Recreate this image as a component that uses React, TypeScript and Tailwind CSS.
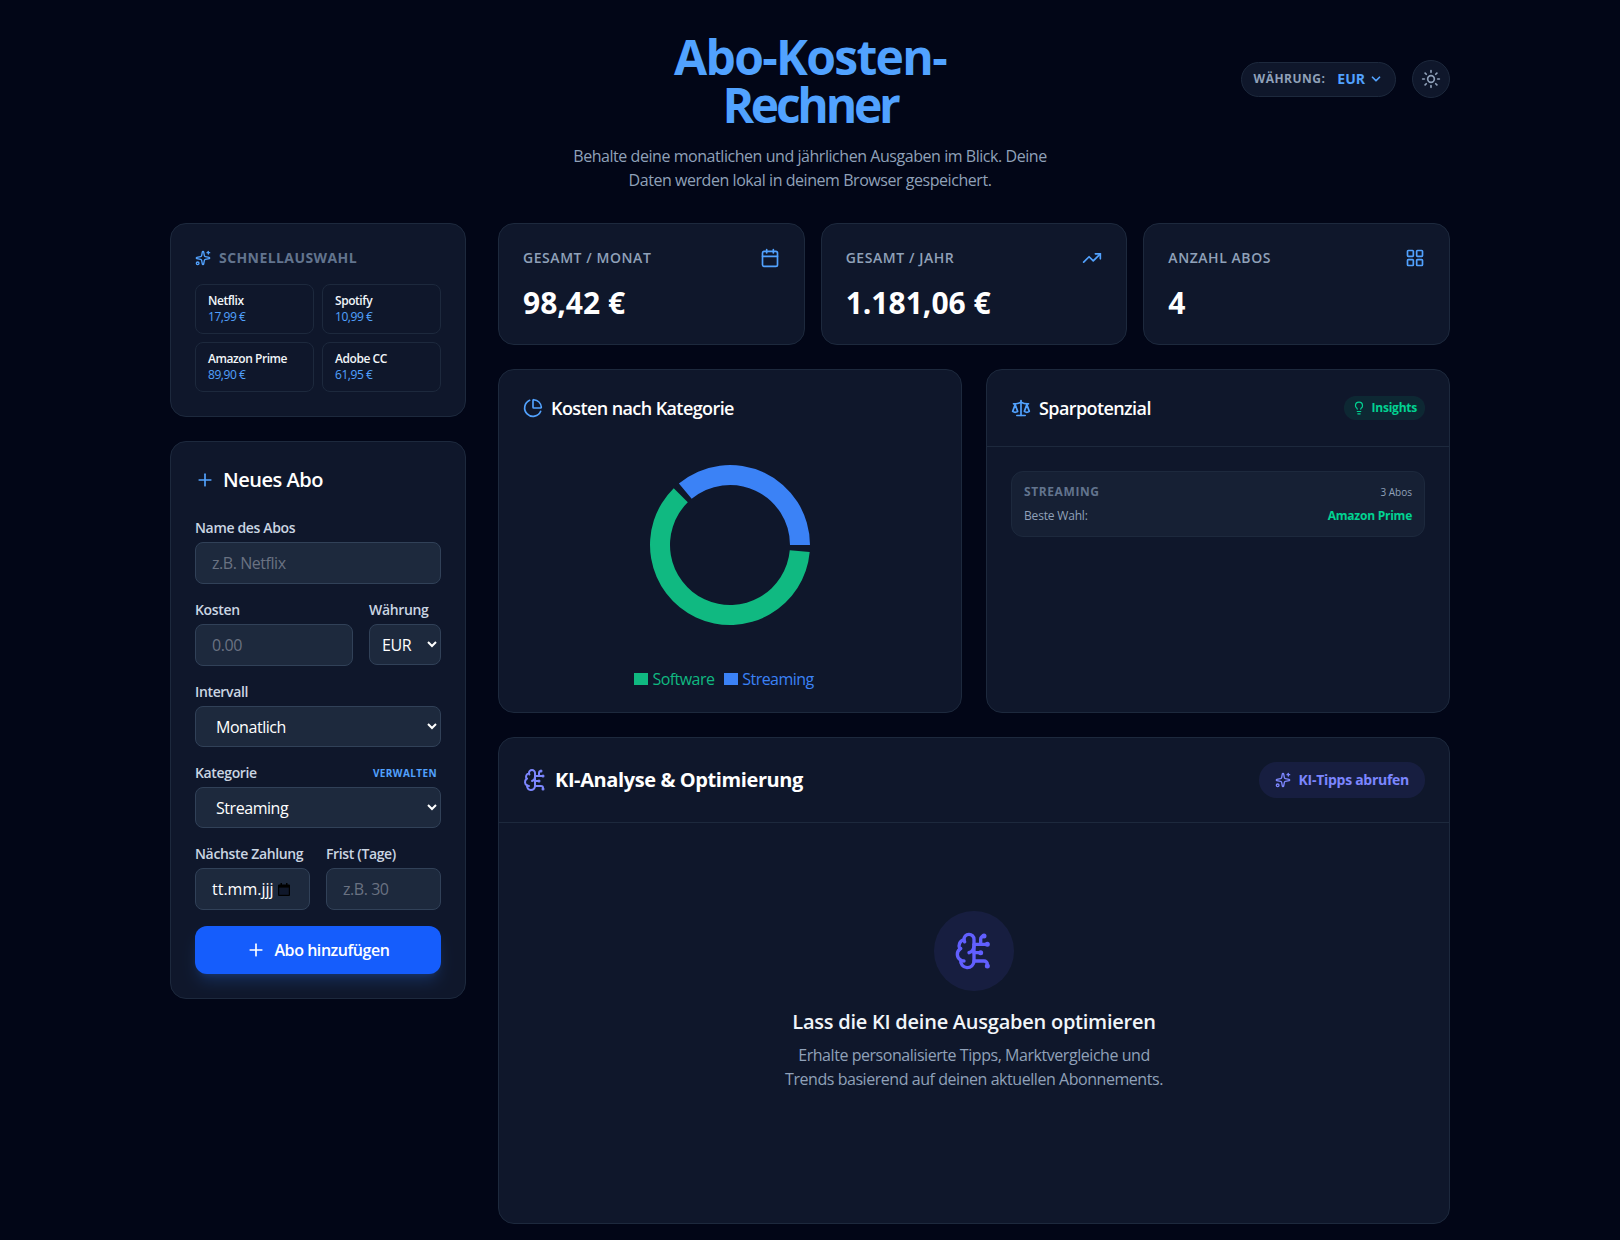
import { BrainCircuit, Calendar, ChartPie, ChevronDown, LayoutGrid, Lightbulb, Plus, Scale, Sparkles, Sun, TrendingUp } from 'lucide-react';

const quickPicks = [
  { name: 'Netflix', price: '17,99 €' },
  { name: 'Spotify', price: '10,99 €' },
  { name: 'Amazon Prime', price: '89,90 €' },
  { name: 'Adobe CC', price: '61,95 €' },
];

const fieldClass =
  'w-full rounded-lg border border-slate-700 bg-slate-800 text-base text-white placeholder:text-gray-500 h-[42px] px-4 py-2';
const selectClass = 'w-full rounded-lg border border-slate-700 bg-slate-800 text-base text-white h-[41px] px-4';
const labelClass = 'mb-1 block text-sm font-semibold tracking-[-0.025em] text-slate-300';

// annulus sector, angles in degrees counter-clockwise from 3 o'clock
function arc(cx: number, cy: number, inner: number, outer: number, from: number, to: number) {
  const pt = (r: number, a: number) => {
    const rad = (a * Math.PI) / 180;
    return `${(cx + r * Math.cos(rad)).toFixed(2)} ${(cy - r * Math.sin(rad)).toFixed(2)}`;
  };
  const large = to - from > 180 ? 1 : 0;
  return `M${pt(outer, from)} A${outer} ${outer} 0 ${large} 0 ${pt(outer, to)} L${pt(inner, to)} A${inner} ${inner} 0 ${large} 1 ${pt(inner, from)} Z`;
}

function StatCard({ label, value, icon }: { label: string; value: string; icon: React.ReactNode }) {
  return (
    <div className="h-[122px] rounded-2xl border border-slate-800 bg-slate-900 p-6">
      <div className="mb-[17px] flex items-center justify-between">
        <span className="text-sm font-semibold uppercase tracking-[0.04em] text-slate-400">{label}</span>
        {icon}
      </div>
      <div className="text-3xl font-bold tracking-normal text-white">{value}</div>
    </div>
  );
}

export default function App() {
  return (
    <div className="min-h-screen bg-[#020617] pb-4 font-['Open_Sans','Noto_Sans',sans-serif] tracking-[-0.028em] text-white">
      <div className="mx-auto max-w-7xl">
        {/* Header */}
        <header className="flex items-start pt-8 pb-[31px]">
          <div className="flex-1" />
          <div className="w-[520px] text-center">
            <h1 className="mt-px mb-[15px] text-5xl font-bold tracking-[-0.035em] text-[#51a2ff]">
              Abo-Kosten-
              <br />
              <span className="tracking-[-0.068em]">Rechner</span>
            </h1>
            <p className="text-base text-slate-400">
              Behalte deine monatlichen und jährlichen Ausgaben im Blick. Deine
              <br />
              Daten werden lokal in deinem Browser gespeichert.
            </p>
          </div>
          <div className="flex flex-1 items-center justify-end gap-4 pt-7">
            <div className="flex h-[35px] items-center gap-3 rounded-full border border-slate-800 bg-slate-900 px-3">
              <span className="text-xs font-bold uppercase tracking-[0.04em] text-slate-400">Währung:</span>
              <span className="flex items-center gap-1 text-sm font-bold tracking-normal text-blue-400">
                EUR
                <ChevronDown className="h-3.5 w-3.5" strokeWidth={3} />
              </span>
            </div>
            <button className="flex h-[38px] w-[38px] items-center justify-center rounded-full border border-slate-800 bg-slate-900 text-slate-400">
              <Sun className="h-5 w-5" />
            </button>
          </div>
        </header>

        <div className="grid grid-cols-4 items-start gap-8">
          {/* Sidebar */}
          <aside className="flex flex-col gap-6">
            <div className="rounded-2xl border border-slate-800 bg-slate-900 p-6">
              <div className="mb-4 flex items-center gap-2">
                <Sparkles className="h-4 w-4 text-blue-400" />
                <h2 className="text-sm font-bold uppercase tracking-[0.03em] text-slate-500">Schnellauswahl</h2>
              </div>
              <div className="grid grid-cols-2 gap-2">
                {quickPicks.map((p) => (
                  <button key={p.name} className="rounded-lg border border-slate-800 bg-slate-900 px-3 py-2 text-left text-xs">
                    <div className="font-semibold text-slate-100">{p.name}</div>
                    <div className="text-blue-400">{p.price}</div>
                  </button>
                ))}
              </div>
            </div>

            <div className="rounded-2xl border border-slate-800 bg-slate-900 p-6">
              <div className="mb-6 flex items-center gap-2">
                <Plus className="h-5 w-5 text-blue-400" />
                <h2 className="text-xl font-semibold tracking-[-0.023em] text-white">Neues Abo</h2>
              </div>
              <div className="flex flex-col gap-4">
                <div>
                  <label className={labelClass}>Name des Abos</label>
                  <input className={fieldClass} placeholder="z.B. Netflix" />
                </div>
                <div className="flex items-start gap-4">
                  <div className="flex-1">
                    <label className={labelClass}>Kosten</label>
                    <input className={fieldClass} placeholder="0.00" />
                  </div>
                  <div className="w-[72px]">
                    <label className={labelClass}>Währung</label>
                    <select className="h-[41px] w-full rounded-lg border border-slate-700 bg-slate-800 px-2 text-base text-white">
                      <option>EUR</option>
                    </select>
                  </div>
                </div>
                <div>
                  <label className={labelClass}>Intervall</label>
                  <select className={selectClass}>
                    <option>Monatlich</option>
                  </select>
                </div>
                <div>
                  <div className="flex items-center justify-between pr-1">
                    <label className={labelClass}>Kategorie</label>
                    <button className="mb-1 text-[10px] font-bold uppercase tracking-[0.04em] text-blue-400">Verwalten</button>
                  </div>
                  <select className={selectClass}>
                    <option>Streaming</option>
                  </select>
                </div>
                <div className="grid grid-cols-2 gap-4">
                  <div>
                    <label className={labelClass}>Nächste Zahlung</label>
                    <div className="flex h-[42px] items-center gap-[3px] overflow-hidden rounded-lg border border-slate-700 bg-slate-800 pl-4 text-base tracking-normal text-white">
                      <span>tt.mm.jjj</span>
                      {/* native date picker glyph */}
                      <svg viewBox="0 0 14 15" className="h-[15px] w-[14px] shrink-0">
                        <path d="M1 3.5a1 1 0 0 1 1-1h1.5V1h1.5v1.5h4V1h1.5v1.5H12a1 1 0 0 1 1 1V13a1 1 0 0 1-1 1H2a1 1 0 0 1-1-1Z" fill="#000" />
                        <rect x="2.2" y="5.6" width="9.6" height="7.2" fill="#0f172a" />
                      </svg>
                    </div>
                  </div>
                  <div>
                    <label className={labelClass}>Frist (Tage)</label>
                    <input className={fieldClass} placeholder="z.B. 30" />
                  </div>
                </div>
                <button className="flex h-12 items-center justify-center gap-2 rounded-xl bg-[#155dfc] text-base font-semibold text-white shadow-lg shadow-blue-500/20">
                  <Plus className="h-5 w-5" />
                  Abo hinzufügen
                </button>
              </div>
            </div>
          </aside>

          {/* Main */}
          <main className="col-span-3 flex flex-col gap-6">
            <div className="grid grid-cols-3 gap-4">
              <StatCard label="Gesamt / Monat" value="98,42 €" icon={<Calendar className="h-5 w-5 text-blue-400" />} />
              <StatCard label="Gesamt / Jahr" value="1.181,06 €" icon={<TrendingUp className="h-5 w-5 text-blue-400" />} />
              <StatCard label="Anzahl Abos" value="4" icon={<LayoutGrid className="h-5 w-5 text-blue-400" />} />
            </div>

            <div className="grid grid-cols-2 gap-6">
              <div className="h-[344px] rounded-2xl border border-slate-800 bg-slate-900 p-6">
                <div className="flex items-center gap-2">
                  <ChartPie className="h-5 w-5 text-blue-400" />
                  <h2 className="text-lg font-semibold tracking-[-0.033em] text-white">Kosten nach Kategorie</h2>
                </div>
                <svg viewBox="0 0 200 200" className="mx-auto mt-[23px] block h-[200px] w-[200px]">
                  <path d={arc(100, 100, 60, 80, 0, 129.7)} fill="#3b82f6" />
                  <path d={arc(100, 100, 60, 80, 134.7, 355)} fill="#10b981" />
                </svg>
                <div className="mt-[22px] flex items-center justify-center gap-2.5 pr-3 text-base tracking-[-0.035em]">
                  <span className="flex items-center gap-1 text-[#10b981]">
                    <span className="h-3 w-3.5 bg-[#10b981]" />
                    Software
                  </span>
                  <span className="flex items-center gap-1 text-[#3b82f6]">
                    <span className="h-3 w-3.5 bg-[#3b82f6]" />
                    Streaming
                  </span>
                </div>
              </div>

              <div className="h-[344px] rounded-2xl border border-slate-800 bg-slate-900">
                <div className="flex items-center justify-between border-b border-slate-800 p-6">
                  <div className="flex items-center gap-2">
                    <Scale className="h-5 w-5 text-blue-400" />
                    <h2 className="text-lg font-semibold tracking-[-0.033em] text-white">Sparpotenzial</h2>
                  </div>
                  <span className="flex h-6 items-center gap-1.5 rounded-full bg-emerald-500/10 px-2 text-xs font-bold tracking-[-0.02em] text-emerald-400">
                    <Lightbulb className="h-3.5 w-3.5" />
                    Insights
                  </span>
                </div>
                <div className="p-6">
                  <div className="rounded-xl border border-slate-800 bg-slate-800/50 p-3">
                    <div className="mb-2 flex items-center justify-between">
                      <span className="text-xs font-bold uppercase tracking-wider text-slate-500">Streaming</span>
                      <span className="text-[10px] tracking-normal text-slate-400">3 Abos</span>
                    </div>
                    <div className="flex items-center justify-between text-xs">
                      <span className="tracking-[-0.015em] text-slate-400">Beste Wahl:</span>
                      <span className="font-bold tracking-[-0.02em] text-emerald-400">Amazon Prime</span>
                    </div>
                  </div>
                </div>
              </div>
            </div>

            <div className="rounded-2xl border border-slate-800 bg-slate-900">
              <div className="flex items-center justify-between border-b border-slate-800 p-6">
                <div className="flex items-center gap-2">
                  <BrainCircuit className="h-6 w-6 text-indigo-400" />
                  <h2 className="text-xl font-bold tracking-[-0.02em] text-white">KI-Analyse &amp; Optimierung</h2>
                </div>
                <button className="flex h-9 items-center gap-2 rounded-full bg-indigo-500/10 px-4 text-sm font-bold tracking-[-0.02em] text-indigo-400">
                  <Sparkles className="h-4 w-4" />
                  KI-Tipps abrufen
                </button>
              </div>
              <div className="flex min-h-[400px] flex-col items-center p-6 pt-[88px] text-center">
                <div className="mb-[17px] flex h-20 w-20 items-center justify-center rounded-full bg-indigo-500/10">
                  <BrainCircuit className="h-10 w-10 text-indigo-500" />
                </div>
                <h3 className="mb-[7px] text-xl font-semibold tracking-[-0.012em] text-slate-100">Lass die KI deine Ausgaben optimieren</h3>
                <p className="text-base text-slate-400">
                  Erhalte personalisierte Tipps, Marktvergleiche und
                  <br />
                  Trends basierend auf deinen aktuellen Abonnements.
                </p>
              </div>
            </div>
          </main>
        </div>
      </div>
    </div>
  );
}
